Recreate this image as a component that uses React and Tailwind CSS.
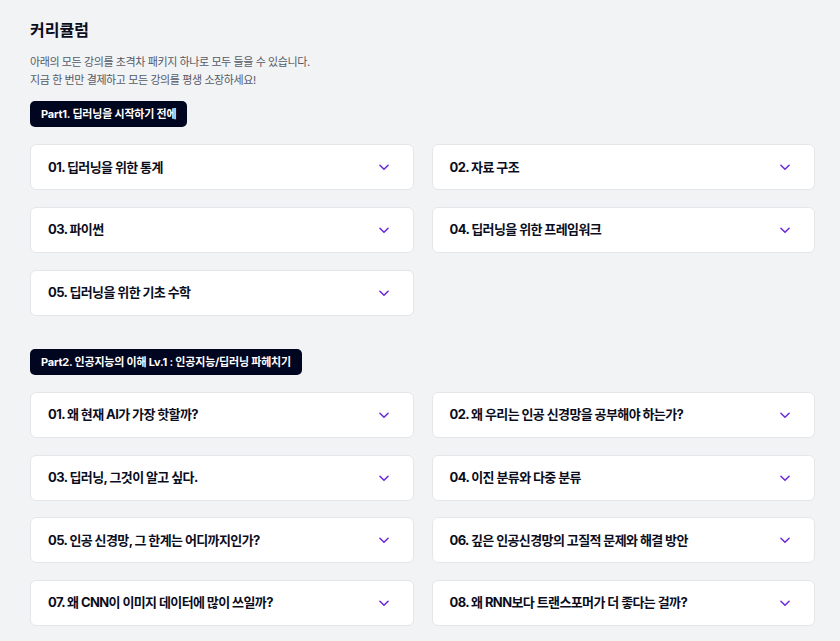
import React from 'react';

const parts = [
  {
    title: 'Part1. 딥러닝을 시작하기 전에',
    items: [
      '01. 딥러닝을 위한 통계',
      '02. 자료 구조',
      '03. 파이썬',
      '04. 딥러닝을 위한 프레임워크',
      '05. 딥러닝을 위한 기초 수학',
    ],
  },
  {
    title: 'Part2. 인공지능의 이해 Lv.1 : 인공지능/딥러닝 파헤치기',
    items: [
      '01. 왜 현재 AI가 가장 핫할까?',
      '02. 왜 우리는 인공 신경망을 공부해야 하는가?',
      '03. 딥러닝, 그것이 알고 싶다.',
      '04. 이진 분류와 다중 분류',
      '05. 인공 신경망, 그 한계는 어디까지인가?',
      '06. 깊은 인공신경망의 고질적 문제와 해결 방안',
      '07. 왜 CNN이 이미지 데이터에 많이 쓰일까?',
      '08. 왜 RNN보다 트랜스포머가 더 좋다는 걸까?',
    ],
  },
];

function Chevron() {
  return (
    <svg width="14" height="14" viewBox="0 0 24 24" fill="none" stroke="#6d28d9" strokeWidth="2.6" strokeLinecap="round" strokeLinejoin="round">
      <path d="M5 9l7 7 7-7" />
    </svg>
  );
}

export default function App() {
  return (
    <div
      className="min-h-screen bg-[#f2f3f5] text-[#0b0d1c] px-[30px] pt-[18px] pb-10"
      style={{ fontFamily: 'Inter, "Noto Sans CJK KR", sans-serif' }}
    >
      <div className="w-[785px]">
        <h2 className="text-[16px] leading-6 font-bold">커리큘럼</h2>
        <p className="mt-[11px] text-[11px] leading-[18px] tracking-[-0.4px] text-[#555a66]">
          아래의 모든 강의를 초격차 패키지 하나로 모두 들을 수 있습니다.
          <br />
          지금 한 번만 결제하고 모든 강의를 평생 소장하세요!
        </p>

        <div className="flex flex-col gap-[32px] mt-[11px]">
          {parts.map((part) => (
            <section key={part.title}>
              <span className="inline-flex items-center h-[26px] px-[11px] rounded-[5px] bg-[#000520] text-white text-[11px] font-bold tracking-[-0.2px]">
                {part.title}
              </span>
              <div className="grid grid-cols-2 gap-x-[18px] gap-y-[16.7px] mt-[17px]">
                {part.items.map((item) => (
                  <div
                    key={item}
                    className="flex items-center justify-between h-[46px] pl-[17px] pr-[22px] bg-white border border-[#e4e6ea] rounded-[6px]"
                  >
                    <span className="text-[13px] font-bold tracking-[-0.6px]">{item}</span>
                    <Chevron />
                  </div>
                ))}
              </div>
            </section>
          ))}
        </div>
      </div>
    </div>
  );
}
